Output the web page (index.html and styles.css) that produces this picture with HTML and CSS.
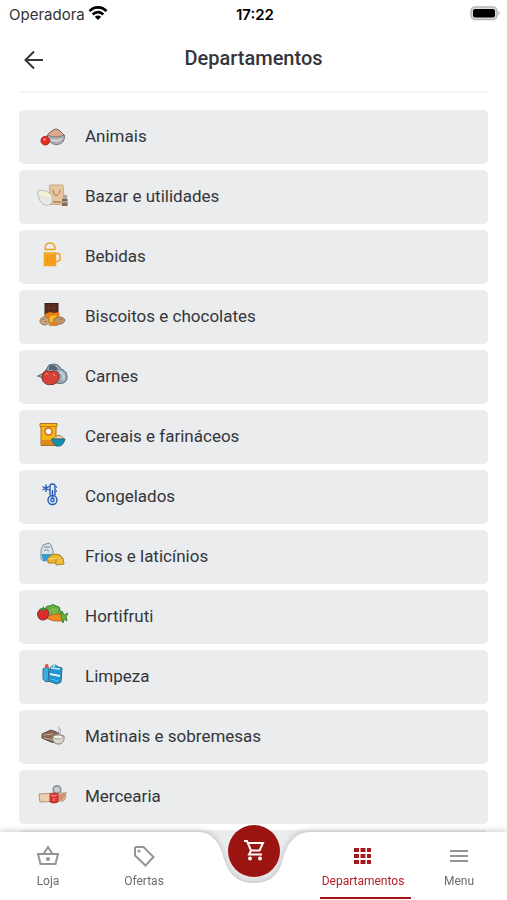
FILE: index.html
```html
<!DOCTYPE html>
<html lang="pt-BR">
<head>
	<meta charset="UTF-8">
	<meta name="viewport" content="width=device-width, initial-scale=1">
	<title>Departamentos</title>
	<link rel="stylesheet" href="styles.css">
</head>
<body>
	<div class="status">
		<div class="carrier">
			<span>Operadora</span>
			<svg width="20" height="16" viewBox="0 0 20 16">
				<g fill="none" stroke="#000" stroke-width="2.6">
					<path d="M1.5 5.2 C6 .1 14 .1 18.5 5.2"></path>
					<path d="M4.7 8.5 C7.7 5.3 12.3 5.3 15.3 8.5"></path>
				</g>
				<path d="M10 14 L6.8 10.7 Q10 8.2 13.2 10.7 Z"></path>
			</svg>
		</div>
		<time>17:22</time>
		<svg class="battery" width="31" height="16" viewBox="0 0 31 16">
			<rect x="1" y="1" width="26" height="12.5" rx="4" fill="#ddd" stroke="#b5b5b5" stroke-width="1.5"></rect>
			<rect x="3" y="3" width="22" height="8.5" rx="2"></rect>
			<path d="M28.5 5 Q31 7.2 28.5 9.5 Z" fill="#aaa"></path>
		</svg>
	</div>
	<header class="top">
		<button type="button" class="back" aria-label="Voltar">
			<svg width="20" height="20" viewBox="0 0 20 20">
				<path d="M19 10 H1.5 M10 1.5 L1.5 10 L10 18.5"></path>
			</svg>
		</button>
		<h1>Departamentos</h1>
	</header>
	<main>
		<ul class="list">
			<li><a href="#">
				<svg class="icon" viewBox="0 0 34 28">
					<path d="M11 14 Q12 11 16 9 Q20 5 24 9 L28 13 L26 17 H13 Z" fill="#dba88b" stroke="#77655d"></path>
					<path d="M11 13 Q20 17 28.500 13 Q29 22 21 22.500 Q13 23 11 13 Z" fill="#b0b2b4" stroke="#77797b"></path>
					<path d="M15 18 Q21 20 26 17" fill="none" stroke="#eee"></path>
					<circle cx="9.300" cy="18.700" r="4.300" fill="#e72c20" stroke="#ac211b"></circle>
					<circle cx="8.500" cy="17.500" r="1.300" fill="#ff9a88"></circle>
				</svg>
				<span>Animais</span></a></li>
			<li><a href="#">
				<svg class="icon" viewBox="0 0 34 28">
					<path d="M13.500 3 H27 L28.500 22.500 H14 Z" fill="#e8c69d" stroke="#c9aa83"></path>
					<path d="M17 8 Q18 15 21.500 13 Q24 12 24 8" fill="none" stroke="#a9763f"></path>
					<path d="M17 20 H27" stroke="#b99263" stroke-width="2"></path>
					<path d="M1.500 9 Q10 6 16 14 Q18 22 11 23.500 Q2 22 1.500 9 Z" fill="#e7e8e2" stroke="#bcbdb7"></path>
					<path d="M2 10 Q7 16 16 15 Q10 7 2 10 Z" fill="#f5f2d4"></path>
					<rect x="27" y="13" width="4" height="4" fill="#aaa6a2"></rect>
					<path d="M26 17 H31.500 V24 H26 Z" fill="#826956"></path>
					<path d="M25 20 H31" stroke="#ddd3c6"></path>
				</svg>
				<span>Bazar e utilidades</span></a></li>
			<li><a href="#">
				<svg class="icon" viewBox="0 0 34 28">
					<g fill="none" stroke="#f3a120" stroke-width="1.500">
						<path d="M9 7 Q9 1 14 1 Q19 1 19 7 M8.500 7.500 H19.500 M8.500 11 V23.500 H19.500 V11 Z"></path>
						<path d="M20 11.500 H22 Q24 11.500 24 14 V17 Q24 19.500 20 19.500"></path>
					</g>
					<path d="M9 12 H19 V23 H9 Z" fill="#f5a11b"></path>
					<path d="M11.500 17 V21 M15 14 V16 M16.500 17 V21" stroke="#e58d12"></path>
				</svg>
				<span>Bebidas</span></a></li>
			<li><a href="#">
				<svg class="icon" viewBox="0 0 34 28">
					<rect x="9" y="1.500" width="13" height="12" fill="#57291b" stroke="#3f211a"></rect>
					<path d="M13 2 V11 M18 2 V11 M9 6 H22" stroke="#704034" stroke-width=".5"></path>
					<path d="M9 12 L14 10 L18 11 L23 10 L24 20 H8 Z" fill="#e98016"></path>
					<path d="M14 14 L20 13 L22 20 H13 Z" fill="#ffb719"></path>
					<ellipse cx="8.500" cy="19" rx="4.500" ry="4" fill="#caa27b" stroke="#92785f"></ellipse>
					<path d="M18 17 Q24 13 28.500 17 Q30 20 25 22 L18 23 Z" fill="#bf956a" stroke="#8c725a"></path>
					<rect x="12.500" y="20" width="10" height="4" rx="2" fill="#d7842a"></rect>
					<path d="M7 17 V18 M10 19 V20 M25 17 V18" stroke="#744c32"></path>
				</svg>
				<span>Biscoitos e chocolates</span></a></li>
			<li><a href="#">
				<svg class="icon" viewBox="0 0 34 28">
					<path d="M1.500 14 L8 11 L13 3 Q22 0 25 7 Q32 9 31 17 Q29 23 20 21 L7 16 Z" fill="#97a8b6" stroke="#5d6c77"></path>
					<path d="M13 4 Q19 1 22 8 L13 8 Z" fill="#526879"></path>
					<path d="M23 10 Q29 11 27 18" fill="none" stroke="#bdc9d2" stroke-width="3"></path>
					<path d="M7 11 Q11 7 14 10 Q20 7 23 12 Q24 20 17 22.500 Q7 24 6 16 Z" fill="#d44335" stroke="#82302b"></path>
					<path d="M9 13 Q10 11 12 12" fill="none" stroke="#f28a77"></path>
					<path d="M17 12 L19 14" stroke="#ffb4a6"></path>
				</svg>
				<span>Carnes</span></a></li>
			<li><a href="#">
				<svg class="icon" viewBox="0 0 34 28">
					<path d="M4 1.500 H21 V4 L20 6 V23.500 H5 V6 L4 4 Z" fill="#f6b718" stroke="#ae711b"></path>
					<path d="M5 18 H20 V23 H5 Z" fill="#dc891d"></path>
					<path d="M5 4.500 H20" stroke="#c77e19"></path>
					<circle cx="12.500" cy="9.500" r="3.500" fill="#fff" stroke="#d26720" stroke-width="1.500"></circle>
					<path d="M17 17 Q19 14 21 14 Q25 12 28 17 Z" fill="#f0d9ad" stroke="#9a8057"></path>
					<path d="M15.500 17 H29 Q27 24 23 24 H20 Q17 22 15.500 17 Z" fill="#148fae" stroke="#276878"></path>
				</svg>
				<span>Cereais e farináceos</span></a></li>
			<li><a href="#">
				<svg class="icon" viewBox="0 0 34 28">
					<g fill="none" stroke="#235bb5" stroke-width="1.400">
						<path d="M14 13.500 V4 Q14 2 16.500 2 Q19 2 19 4 V13.500"></path>
						<circle cx="16.500" cy="18" r="4.500"></circle>
						<circle cx="16.500" cy="18" r="1.700"></circle>
						<path d="M16.500 8 V16 M20 5 H21 M20 9 H21"></path>
						<path d="M10 2.500 V10 M6.500 4.500 L13 8 M6.500 8 L13 4.500"></path>
					</g>
				</svg>
				<span>Congelados</span></a></li>
			<li><a href="#">
				<svg class="icon" viewBox="0 0 34 28">
					<path d="M7 3 L13 1 L15 3 L17 8 V18 L7 19 L5 17 V8 Z" fill="#d7e1e6" stroke="#82919a"></path>
					<path d="M5.500 12 H17 V18 L7 19 Z" fill="#349cce"></path>
					<path d="M8 5 H14 M8 9 Q10 6 13 9" fill="none" stroke="#7c8e99"></path>
					<path d="M12 16 L16 12.500 Q25 11 26 16 L25 21 H12 Z" fill="#edb42b" stroke="#b08333"></path>
					<path d="M20 17 L27 16 L28 22 L20 23 Z" fill="#f2be3b" stroke="#b08333"></path>
					<path d="M12 17 L25 16" stroke="#ffd86d"></path>
				</svg>
				<span>Frios e laticínios</span></a></li>
			<li><a href="#">
				<svg class="icon" viewBox="0 0 34 28">
					<path d="M9 8 Q10 3 14 4 Q17 1 20 4 Q24 4 24 8 Q26 13 21 14 L11 15 Z" fill="#65af45" stroke="#3b7b31"></path>
					<path d="M12 11 Q17 5 22 8 M17 7 L19 12" fill="none" stroke="#8fca5a"></path>
					<path d="M10 16 Q18 10 26 13 L26 19 Q17 20 10 16 Z" fill="#f38b20" stroke="#b76a29"></path>
					<path d="M25 15 L26 9 L28 13 L32 11 L30 15 L31 19 L28 17 L27 21 Z" fill="#68b63d" stroke="#438332"></path>
					<path d="M7 7 Q13 6 12.500 12 Q12 18 7 18 Q2 18 1.500 12 Q2 7 7 7 Z" fill="#d92c2b" stroke="#91292a"></path>
					<path d="M3 7 L7 9 L11 7 L8 6 L8 4 L6 6 Z" fill="#3d8b36"></path>
				</svg>
				<span>Hortifruti</span></a></li>
			<li><a href="#">
				<svg class="icon" viewBox="0 0 34 28">
					<path d="M7 7 L10 5 L13 7 L15 18 L10 20 L7 17 Z" fill="#3aaedd" stroke="#376f8c"></path>
					<path d="M9 2.500 L12 2 L13 6 H9 Z" fill="#e25147"></path>
					<path d="M15 5 Q19 1 22 5 L26 6 L25 20 L21 22 L12 19 L13 8 Z" fill="#2197d0" stroke="#316a91"></path>
					<path d="M15 6 L24 7 M17 5 L19 3" stroke="#c8efff" stroke-width="1.500"></path>
					<path d="M14 11 L24 13 V15 L14 13 Z" fill="#edf3f5"></path>
					<path d="M15 17 L22 19" stroke="#57c6ef"></path>
				</svg>
				<span>Limpeza</span></a></li>
			<li><a href="#">
				<svg class="icon" viewBox="0 0 34 28">
					<path d="M6 12 L15 8 L23 11 L22 21 L15 20 L6 16 Z" fill="#8b6854" stroke="#5d4a40"></path>
					<path d="M7 13 L17 12 M8 16 L18 18" stroke="#c2a993"></path>
					<path d="M16 15 Q22 11 28 14 Q29 20 24 22 Q17 23 16 15 Z" fill="#dbd7d1" stroke="#8b8783"></path>
					<ellipse cx="22" cy="15" rx="5" ry="2" fill="#f4f0e9" stroke="#a29a90"></ellipse>
					<path d="M21 11 Q25 9 22 5 Q26 7 24 12" fill="none" stroke="#aeb7bd"></path>
				</svg>
				<span>Matinais e sobremesas</span></a></li>
			<li><a href="#">
				<svg class="icon" viewBox="0 0 34 28">
					<path d="M3 12 L21 11 L30 11 L29 17 L27 19 L4 20 Z" fill="#edd0b2" stroke="#b79275"></path>
					<path d="M22 13 L31 10 L27 18 L22 19 Z" fill="#d29274"></path>
					<circle cx="21" cy="7.500" r="3.800" fill="#c4cacd" stroke="#858b8f" stroke-width="1.500"></circle>
					<path d="M14 12 Q18 10 22 12 V20 Q18 22 14 20 Z" fill="#e23634" stroke="#ac3030"></path>
					<path d="M15 13 Q18 15 21 13 M18 16 V19" fill="none" stroke="#ff9a8d"></path>
				</svg>
				<span>Mercearia</span></a></li>
			<li class="blank" aria-hidden="true"></li>
		</ul>
	</main>
	<nav class="tabs">
		<!-- barra com o recorte do carrinho -->
		<div class="bar">
			<div class="side"></div>
			<svg class="notch" width="123" height="68" viewBox="0 0 123 68">
				<path d="M0 0 H6 C21 0 28 12 32 27 C37 43 46 51 62 51 C78 51 87 43 91 27 C95 12 103 0 118 0 H123 V68 H0 Z"></path>
			</svg>
			<div class="side"></div>
		</div>
		<a href="#" class="tab">
			<svg width="24" height="24" viewBox="0 0 24 24">
				<path d="M2 9 H22 L19.500 19 H4.500 Z M7.500 9 L12 2 L16.500 9"></path>
				<circle cx="12" cy="14" r="1" fill="#959595"></circle>
			</svg>
			<span>Loja</span>
		</a>
		<a href="#" class="tab">
			<svg width="24" height="24" viewBox="0 0 24 24">
				<path d="M4 2 H11.500 L21.500 12 L13.500 20.500 L3 10.500 V3 Z"></path>
				<circle cx="7" cy="6" r=".6" fill="#959595"></circle>
			</svg>
			<span>Ofertas</span>
		</a>
		<button type="button" class="cart" aria-label="Carrinho">
			<svg width="24" height="24" viewBox="0 0 24 24">
				<path d="M2 2 H5 L9 11.500 H17.500 L21 4 H6 M9 11.500 L7 15.500 H20"></path>
				<circle cx="8" cy="19.500" r="2"></circle>
				<circle cx="18" cy="19.500" r="2"></circle>
			</svg>
		</button>
		<a href="#" class="tab active" aria-current="page">
			<svg width="24" height="24" viewBox="0 0 24 24">
				<path d="M3 3h5v4H3z M9.500 3h5v4h-5z M16 3h4v4h-4z M3 9h5v4H3z M9.500 9h5v4h-5z M16 9h4v4h-4z M3 15h5v4H3z M9.500 15h5v4h-5z M16 15h4v4h-4z"></path>
			</svg>
			<span>Departamentos</span>
		</a>
		<a href="#" class="tab">
			<svg width="24" height="24" viewBox="0 0 24 24">
				<path d="M3 6 H21 M3 11 H21 M3 16 H21"></path>
			</svg>
			<span>Menu</span>
		</a>
	</nav>
</body>
</html>
```

FILE: styles.css
```css
*{
	box-sizing: border-box;
}
body{
	margin: 0;
	background: #fff;
	color: #34363b;
	font-family: Roboto, sans-serif;
}
button{
	padding: 0;
	border: 0;
	background: none;
	cursor: pointer;
}
a{
	color: inherit;
	text-decoration: none;
}
.status{
	display: grid;
	grid-template-columns: 1fr auto 1fr;
	align-items: center;
	height: 28px;
	padding: 0 6px 0 9px;
	color: #333;
	font-family: Inter, sans-serif;
	font-size: 15px;
}
.carrier{
	display: flex;
	align-items: center;
	gap: 3px;
}
.status time{
	font-weight: 600;
	color: #000;
}
.battery{
	justify-self: end;
}
.top{
	display: grid;
	grid-template-columns: 30px 1fr 30px;
	align-items: center;
	height: 65px;
	margin: 0 19px;
	border-bottom: 2px solid #f5f5f5;
}
.back{
	display: flex;
	justify-content: center;
}
.back svg{
	fill: none;
	stroke: #34363b;
	stroke-width: 2;
}
.top h1{
	margin: 0;
	padding-bottom: 4px;
	font-size: 20px;
	font-weight: 500;
	text-align: center;
}
.list{
	display: flex;
	flex-direction: column;
	gap: 6px;
	margin: 0;
	padding: 17px 19px;
	list-style: none;
}
.list a, .blank{
	display: flex;
	align-items: center;
	gap: 15px;
	height: 54px;
	padding: 0 17px 2px;
	border-radius: 5px;
	background: #eaeced;
	font-size: 17px;
}
.icon{
	width: 34px;
	height: 28px;
}
.tabs{
	position: fixed;
	left: 0;
	right: 0;
	bottom: 0;
	display: grid;
	grid-template-columns: 1fr 1fr 123px 1fr 1fr;
	height: 68px;
}
.bar{
	position: absolute;
	top: 0;
	left: 0;
	right: 0;
	bottom: 0;
	display: flex;
	filter: drop-shadow(0 -1px 3px rgba(0,0,0,.2));
}
.side{
	flex: 1;
	background: #fff;
}
.notch{
	fill: #fff;
}
.tab{
	position: relative;
	display: flex;
	flex-direction: column;
	align-items: center;
	gap: 5px;
	padding-top: 13px;
	color: #6b6b6b;
	font-size: 12px;
	line-height: 14px;
}
.tab svg{
	fill: none;
	stroke: #959595;
	stroke-width: 2;
}
.active{
	color: #b32025;
}
.active svg{
	fill: #a3191c;
	stroke: none;
}
.active::after{
	content: "";
	position: absolute;
	left: 5px;
	right: 0;
	bottom: 1px;
	height: 2px;
	background: #a51418;
}
.cart{
	position: relative;
	top: -7px;
	display: flex;
	align-items: center;
	justify-content: center;
	justify-self: center;
	width: 52px;
	height: 52px;
	border-radius: 50%;
	background: #9b1411;
}
.cart svg{
	fill: none;
	stroke: #fff;
	stroke-width: 2;
}
.cart circle{
	fill: #fff;
	stroke: none;
}
```
